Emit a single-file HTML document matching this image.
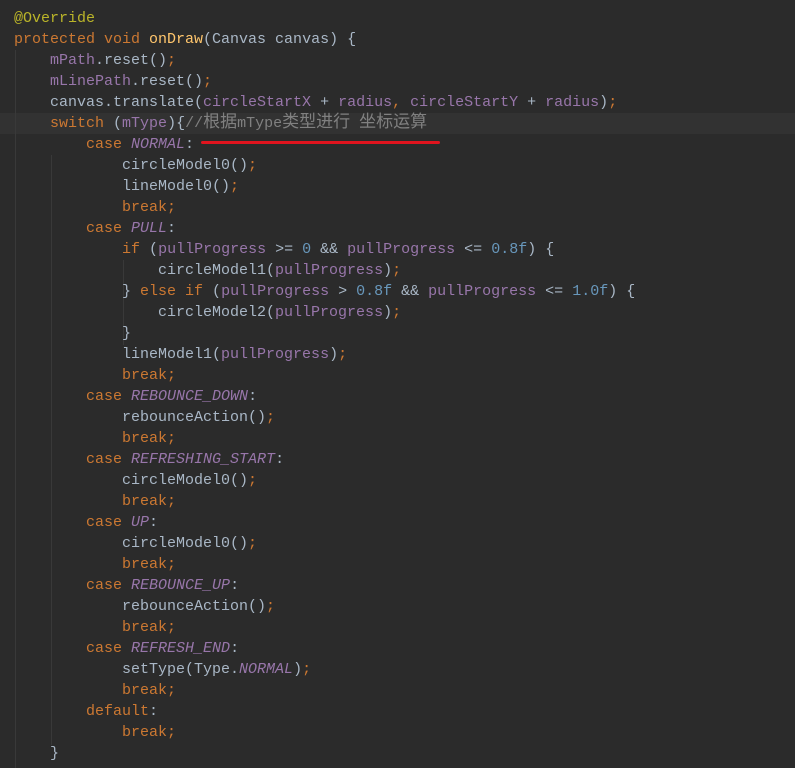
<!DOCTYPE html>
<html><head><meta charset="utf-8"><style>
html,body{margin:0;padding:0;background:#2b2b2b;width:795px;height:768px;overflow:hidden}
pre{margin:0;position:absolute;left:14px;top:8px;font:15px/21px "Liberation Mono","Noto Sans CJK SC",monospace;color:#a9b7c6;white-space:pre}
.k{color:#cc7832}.a{color:#bbb529}.m{color:#ffc66d}.f{color:#9876aa}.n{color:#6897bb}.c{color:#808080}.e{color:#9876aa;font-style:italic}
.cj{font-family:"Noto Sans CJK SC",sans-serif;font-size:17px;line-height:0}
.hl{position:absolute;left:0;top:113px;width:795px;height:21px;background:#323232}
.g{position:absolute;width:1px;background:#393939}
.red{position:absolute;left:201px;top:141px;width:239px;height:3px;background:#e0141e;border-radius:2px}
</style></head><body>
<div class="hl"></div>
<div class="g" style="left:15px;top:50px;height:718px"></div>
<div class="g" style="left:51px;top:155px;height:590px"></div>
<div class="g" style="left:123px;top:260px;height:85px"></div>
<pre><span class="a">@Override</span>
<span class="k">protected void </span><span class="m">onDraw</span>(Canvas canvas) {
    <span class="f">mPath</span>.reset()<span class="k">;</span>
    <span class="f">mLinePath</span>.reset()<span class="k">;</span>
    canvas.translate(<span class="f">circleStartX</span> + <span class="f">radius</span><span class="k">, </span><span class="f">circleStartY</span> + <span class="f">radius</span>)<span class="k">;</span>
    <span class="k">switch </span>(<span class="f">mType</span>){<span class="c">//<span class="cj">根据</span>mType<span class="cj">类型进行</span> <span class="cj">坐标运算</span></span>
        <span class="k">case </span><span class="e">NORMAL</span>:
            circleModel0()<span class="k">;</span>
            lineModel0()<span class="k">;</span>
            <span class="k">break;</span>
        <span class="k">case </span><span class="e">PULL</span>:
            <span class="k">if </span>(<span class="f">pullProgress</span> &gt;= <span class="n">0</span> &amp;&amp; <span class="f">pullProgress</span> &lt;= <span class="n">0.8f</span>) {
                circleModel1(<span class="f">pullProgress</span>)<span class="k">;</span>
            } <span class="k">else if </span>(<span class="f">pullProgress</span> &gt; <span class="n">0.8f</span> &amp;&amp; <span class="f">pullProgress</span> &lt;= <span class="n">1.0f</span>) {
                circleModel2(<span class="f">pullProgress</span>)<span class="k">;</span>
            }
            lineModel1(<span class="f">pullProgress</span>)<span class="k">;</span>
            <span class="k">break;</span>
        <span class="k">case </span><span class="e">REBOUNCE_DOWN</span>:
            rebounceAction()<span class="k">;</span>
            <span class="k">break;</span>
        <span class="k">case </span><span class="e">REFRESHING_START</span>:
            circleModel0()<span class="k">;</span>
            <span class="k">break;</span>
        <span class="k">case </span><span class="e">UP</span>:
            circleModel0()<span class="k">;</span>
            <span class="k">break;</span>
        <span class="k">case </span><span class="e">REBOUNCE_UP</span>:
            rebounceAction()<span class="k">;</span>
            <span class="k">break;</span>
        <span class="k">case </span><span class="e">REFRESH_END</span>:
            setType(Type.<span class="e">NORMAL</span>)<span class="k">;</span>
            <span class="k">break;</span>
        <span class="k">default</span>:
            <span class="k">break;</span>
    }</pre>
<div class="red"></div>
</body></html>
